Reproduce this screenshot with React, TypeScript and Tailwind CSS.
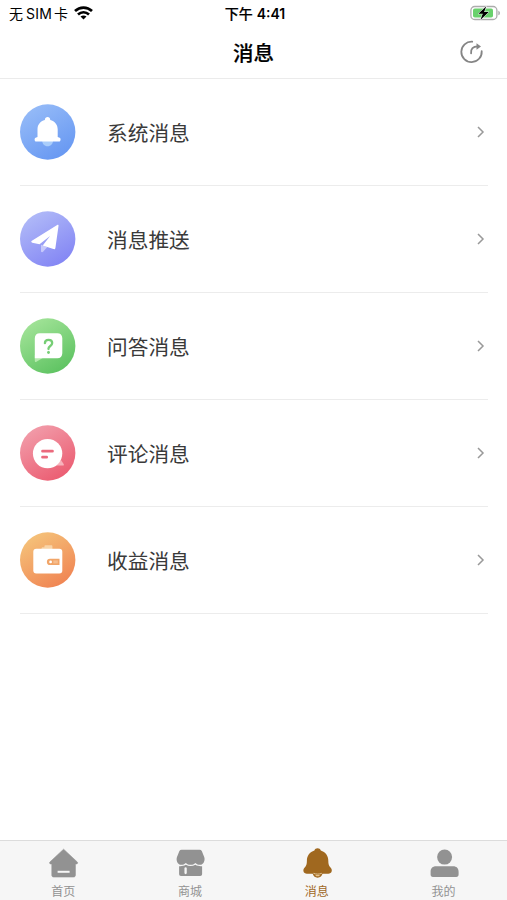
import type { ReactNode } from "react";

type Message = {
  title: string;
  from: string;
  to: string;
  glyph: ReactNode;
};

const messages: Message[] = [
  {
    title: "系统消息",
    from: "#98bdf8",
    to: "#6697f2",
    glyph: (
      <>
        <path d="M22 36h11.200c-.2 3.800-2.300 6.300-5.600 6.300S22.200 39.800 22 36Z" fill="#a9cdfb" />
        <path
          d="M27.600 13c1.500 0 2.600 1 2.600 2.500v.6c4.700 1.200 7.500 4.800 7.500 9.300v7.600l1.900.7c1.500.6 1.300 3.800-.5 3.800H16.100c-1.800 0-2-3.200-.5-3.800l1.900-.7v-7.600c0-4.500 2.700-8.100 7.400-9.300v-.6c0-1.500 1.200-2.500 2.700-2.500Z"
          fill="#fff"
        />
      </>
    ),
  },
  {
    title: "消息推送",
    from: "#b3bdf8",
    to: "#8284f4",
    glyph: (
      <>
        <path d="M21 33.800 27.300 36l-4 4.600c-1 1-2.300.7-2.300-.6Z" fill="#c6c8fb" />
        <path
          d="M37.200 13.900c.9-.5 1.500 0 1.300 1l-3.100 22c-.2 1.100-1 1.600-2 1.200L22.700 34.500l7.400-9.600-10.600 8.300-7.200-1.500c-1.200-.3-1.400-1.200-.4-1.900Z"
          fill="#fff"
        />
      </>
    ),
  },
  {
    title: "问答消息",
    from: "#a6e59b",
    to: "#5cc260",
    glyph: (
      <>
        <path d="M14.800 37v6c0 1.100.8 1.300 1.600.7l8-4.700Z" fill="#b5eaae" />
        <path d="M19.800 15.300h17.500c3.100 0 5 1.900 5 5v15c0 3.100-1.900 5-5 5H14.800v-20c0-3.100 1.900-5 5-5Z" fill="#fff" />
        <path
          d="M24.900 25.200c0-2.100 1.500-3.400 3.600-3.400s3.700 1.300 3.700 3.300c0 2.800-3.700 2.900-3.700 5.500v.5"
          fill="none"
          stroke="#76ce75"
          strokeWidth="2.300"
          strokeLinecap="round"
        />
        <circle cx="28.500" cy="34.500" r="1.450" fill="#76ce75" />
      </>
    ),
  },
  {
    title: "评论消息",
    from: "#f2a0ad",
    to: "#eb5b70",
    glyph: (
      <>
        <path d="m41 35 2.600 4c.6 1 .2 1.500-.8 1.500H36Z" fill="#f7b3bc" />
        <circle cx="27.600" cy="28.600" r="14.700" fill="#fff" />
        <path d="M22.500 26.200h10M22.500 32.200h4.200" stroke="#eb6a7d" strokeWidth="2.700" strokeLinecap="round" />
      </>
    ),
  },
  {
    title: "收益消息",
    from: "#f5c67c",
    to: "#f08352",
    glyph: (
      <>
        <path d="M21.500 17.500v-1c0-.8.500-1.200 1.300-1.200h1.600v-1c0-.7.400-1.100 1.100-1.100h5.800c.7 0 1.100.4 1.100 1.100v3.200Z" fill="#f9d4a7" />
        <rect x="13.300" y="16.800" width="29" height="24.700" rx="3" fill="#fff" />
        <path d="M39.500 26.800H30a3.100 3.100 0 0 0 0 6.200h9.500Z" fill="#f1a568" />
        <rect x="33.300" y="28.400" width="4.500" height="3" fill="#f6bd8e" />
        <circle cx="30.600" cy="29.900" r="1.400" fill="#fff" />
      </>
    ),
  },
];

type Tab = {
  label: string;
  active?: boolean;
  icon: ReactNode;
};

const tabs: Tab[] = [
  {
    label: "首页",
    icon: (
      <>
        <path
          d="M15 1.200 28.700 14c.6.600.3 1.900-.7 1.900h-1.200v11.300c0 1.100-.7 1.800-1.800 1.800H5c-1.100 0-1.800-.7-1.800-1.800V15.900H2c-1 0-1.300-1.300-.7-1.900Z"
          fill="currentColor"
          stroke="currentColor"
          strokeWidth=".6"
          strokeLinejoin="round"
        />
        <path d="M9 23.800h12" stroke="#f6f6f6" strokeWidth="2" />
      </>
    ),
  },
  {
    label: "商城",
    icon: (
      <>
        <path
          d="M6 1.700h18c1 0 1.700.4 2.200 1.200l2.500 6.300c1 3.200-.7 7.600-4.200 7.600-2 0-3.300-.6-4.700-1.900-1.400 1.300-2.700 1.900-4.800 1.900s-3.400-.6-4.800-1.900c-1.400 1.300-2.700 1.900-4.700 1.900C2 16.800.3 12.400 1.300 9.200l2.500-6.300c.5-.8 1.200-1.200 2.200-1.200Z"
          fill="currentColor"
        />
        <path
          d="M3.500 18.200c2.500.2 4.700-.2 6.700-1.400 3 1.700 6.600 1.700 9.600 0 2 1.200 4.200 1.600 6.700 1.400v7.900c0 1.200-.7 1.900-1.900 1.900H5.400c-1.200 0-1.900-.7-1.900-1.900Z"
          fill="currentColor"
        />
        <path d="M10 20.500v4.500" stroke="#f6f6f6" strokeWidth="2.300" strokeLinecap="round" />
      </>
    ),
  },
  {
    label: "消息",
    active: true,
    icon: (
      <>
        <path
          d="M15 .3c1.500 0 2.800.8 3.200 2.200C22.800 4 25.700 7.800 25.700 12.800c0 3.200.6 5.200 2.200 6.800 2.500 2.600 1.300 6.200-2.200 6.200H4.300c-3.500 0-4.700-3.600-2.200-6.200 1.600-1.600 2.200-3.600 2.200-6.800 0-5 2.900-8.800 7.500-10.300C12.200 1.100 13.500.3 15 .3Z"
          fill="currentColor"
        />
        <path d="M10 25h10c-.5 2.900-2.300 4.700-5 4.700s-4.500-1.800-5-4.700Z" fill="currentColor" />
        <path d="M10.800 25.300c2.500 1.100 5.900 1.100 8.400 0" fill="none" stroke="#e8cfa6" strokeWidth=".9" />
        <path d="M13.500 27.600h3" stroke="#e5c28c" strokeWidth="1.300" strokeLinecap="round" />
      </>
    ),
  },
  {
    label: "我的",
    icon: (
      <>
        <circle cx="15" cy="9.100" r="7.500" fill="currentColor" />
        <path d="M6.500 18.300h17c3.500 0 5.500 2.200 5.500 5.400v2.800c0 1.600-.8 2.500-2.300 2.500H3.300C1.800 29 1 28.100 1 26.500v-2.800c0-3.200 2-5.400 5.500-5.400Z" fill="currentColor" />
      </>
    ),
  },
];

function StatusBar() {
  return (
    <div className="grid h-[26px] grid-cols-3 items-center pr-[6px] pl-[9px] text-black">
      <div className="flex items-center text-[14px] leading-none">
        <span className="whitespace-nowrap">
          无<span className="mr-[2px] ml-[3px] font-['Inter'] tracking-[0.2px]">SIM</span>卡
        </span>
        <svg className="ml-[6px] h-[14px] w-[19px]" viewBox="0 0 19 14" fill="none" stroke="currentColor" strokeWidth="2.700">
          <path d="M1 5c4.900-4.600 12.100-4.600 17 0M4 8.400c3.200-2.900 7.800-2.900 11 0" />
          <path d="M9.500 13.400 6.500 10.600c1.800-1.500 4.200-1.500 6 0Z" fill="currentColor" stroke="none" />
        </svg>
      </div>
      <div className="text-center text-[14px] leading-none whitespace-nowrap">
        <span className="font-medium [-webkit-text-stroke:0.2px]">下午</span>
        <span className="ml-[4px] font-['Inter'] font-semibold">4:41</span>
      </div>
      <svg className="h-[16px] w-[31px] justify-self-end" viewBox="0 0 31 16">
        <rect x=".9" y="1.500" width="26" height="13" rx="3.800" fill="#fff" stroke="#acacac" strokeWidth="1.300" />
        <rect x="3" y="3.500" width="20" height="9" rx="1.800" fill="#69d16c" />
        <path d="M28.300 5.700c2.200.7 2.200 3.900 0 4.600Z" fill="#acacac" />
        <path d="M16.300 1.200 8.300 8.800h4.500l-2.500 6.200 8.500-7.900h-4.700Z" fill="#000" stroke="#fff" strokeWidth="1" paintOrder="stroke" />
      </svg>
    </div>
  );
}

function Header() {
  return (
    <header className="flex h-[53px] items-center justify-between border-b border-[#ebebeb] px-[23px]">
      <span className="w-[24px]" />
      <h1 className="text-[20.500px] leading-none font-medium text-black [-webkit-text-stroke:0.200px]">消息</h1>
      <button aria-label="分享" className="text-[#858585]">
        <svg className="h-[24px] w-[24px]" viewBox="0 0 24 24" fill="none" stroke="currentColor" strokeWidth="1.800">
          <path d="M12.200 1.700A10.200 10.200 0 1 0 21.700 11.200" strokeLinecap="round" />
          <path d="M11.100 13.300c-.4-4.400 1.900-6.900 6.600-6.900" strokeLinecap="round" />
          <path d="m16.500 3.200 4.500 3.300-4.500 3.200Z" fill="currentColor" stroke="none" />
        </svg>
      </button>
    </header>
  );
}

function MessageRow({ message, index }: { message: Message; index: number }) {
  const id = `badge-${index}`;
  return (
    <li className="flex h-[107px] items-center border-b border-[#ececec]">
      <svg className="h-[56px] w-[56px] shrink-0" viewBox="0 0 56 56">
        <defs>
          <linearGradient id={id} x1=".15" y1="0" x2=".75" y2="1">
            <stop stopColor={message.from} />
            <stop offset="1" stopColor={message.to} />
          </linearGradient>
        </defs>
        <circle cx="27.700" cy="28" r="27.700" fill={`url(#${id})`} />
        {message.glyph}
      </svg>
      <span className="ml-[31px] flex-1 text-[20.700px] leading-none text-[#3a3a3a]">{message.title}</span>
      <svg className="mr-[3px] h-[12px] w-[8px]" viewBox="0 0 8 12" fill="none" stroke="#999" strokeWidth="1.500">
        <path d="m1 1 5 5-5 5" />
      </svg>
    </li>
  );
}

export default function App() {
  return (
    <div className="flex h-screen w-full flex-col bg-white font-['Noto_Sans_CJK_SC',sans-serif]">
      <StatusBar />
      <Header />
      <main className="flex-1">
        <ul className="mr-[19px] ml-[20px]">
          {messages.map((message, index) => (
            <MessageRow key={message.title} message={message} index={index} />
          ))}
        </ul>
      </main>
      <nav className="grid h-[60px] grid-cols-4 border-t border-[#dcdcdc] bg-[#f6f6f6]">
        {tabs.map((tab) => (
          <button
            key={tab.label}
            className={`flex flex-col items-center pt-[7px] ${tab.active ? "text-[#a0681f]" : "text-[#929292]"}`}
          >
            <svg className="h-[30px] w-[30px] overflow-visible" viewBox="-.6 0 30 30">
              {tab.icon}
            </svg>
            <span className="mt-[7px] text-[12px] leading-none">{tab.label}</span>
          </button>
        ))}
      </nav>
    </div>
  );
}
